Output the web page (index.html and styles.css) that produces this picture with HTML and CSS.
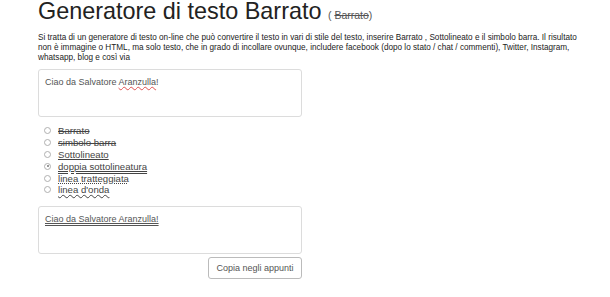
FILE: index.html
```html
<!DOCTYPE html>
<html lang="it">
<head>
<meta charset="utf-8">
<title>Generatore di testo Barrato</title>
<link rel="stylesheet" href="styles.css">
</head>
<body>
<main class="page">
  <h1 class="title">Generatore di testo Barrato <small class="title-sub">( <s>Barrato</s>)</small></h1>
  <p class="intro">Si tratta di un generatore di testo on-line che può convertire il testo in vari di stile del testo, inserire Barrato , Sottolineato e il simbolo barra. Il risultato non è immagine o HTML, ma solo testo, che in grado di incollare ovunque, includere facebook (dopo lo stato / chat / commenti), Twitter, Instagram, whatsapp, blog e così via</p>
  <div class="box">Ciao da Salvatore <span class="spell">Aranzulla</span>!</div>
  <ul class="options">
    <li class="opt"><span class="radio"></span><span class="lbl strike">Barrato</span></li>
    <li class="opt"><span class="radio"></span><span class="lbl strike">simbolo barra</span></li>
    <li class="opt"><span class="radio"></span><span class="lbl under">Sottolineato</span></li>
    <li class="opt"><span class="radio checked"></span><span class="lbl double">doppia sottolineatura</span></li>
    <li class="opt"><span class="radio"></span><span class="lbl dotted">linea tratteggiata</span></li>
    <li class="opt"><span class="radio"></span><span class="lbl wavy">linea d'onda</span></li>
  </ul>
  <div class="box"><span class="double">Ciao da Salvatore Aranzulla!</span></div>
  <div class="actions"><button class="copy">Copia negli appunti</button></div>
</main>
</body>
</html>
```
FILE: styles.css
```css
html, body { margin: 0; padding: 0; background: #fff; }
body { font-family: "Liberation Sans", Arial, sans-serif; color: #333; }
.page { width: 540px; padding: 0 0 0 38px; margin-top: -3px; }
.title {
  font-family: "Liberation Sans", Arial, sans-serif;
  font-weight: normal; font-size: 23.4px; line-height: 28px;
  margin: 0; color: #222;
}
.title-sub { font-size: 10.5px; line-height: 10px; color: #555; }
.intro {
  font-size: 8.2px; line-height: 10px; color: #222;
  margin: 8px 0 6px 0;
}
.box {
  width: 250px; height: 34px; padding: 6px 6px;
  border: 1px solid #dcdcdc; border-radius: 3px;
  font-size: 9px; line-height: 12px; color: #555;
}
.spell { text-decoration: underline wavy #e05050; text-decoration-thickness: 1px; }
.options { list-style: none; margin: 8px 0 10px 0; padding: 0 0 0 6px; }
.opt { display: flex; align-items: center; height: 11.8px; line-height: 11px; font-size: 9.6px; color: #444; }
.radio {
  width: 7px; height: 7px; border: 1px solid #b0b0b0; border-radius: 50%;
  margin-right: 6px; box-sizing: border-box; position: relative; flex: none;
}
.radio.checked::after {
  content: ""; position: absolute; left: 1.5px; top: 1.5px; width: 2px; height: 2px;
  border-radius: 50%; background: #777;
}
.lbl { padding: 0 1px; }
.strike { text-decoration: line-through; }
.under { text-decoration: underline; }
.double { text-decoration: underline double; }
.dotted { text-decoration: underline dotted; }
.wavy { text-decoration: underline wavy; text-decoration-thickness: 1px; }
.actions { width: 264px; display: flex; justify-content: flex-end; margin-top: 3px; }
.copy {
  font-family: "Liberation Sans", Arial, sans-serif; font-size: 9px; color: #555;
  background: #fff; border: 1px solid #bbb; border-radius: 3px;
  width: 94px; height: 22px; padding: 0;
}
```
